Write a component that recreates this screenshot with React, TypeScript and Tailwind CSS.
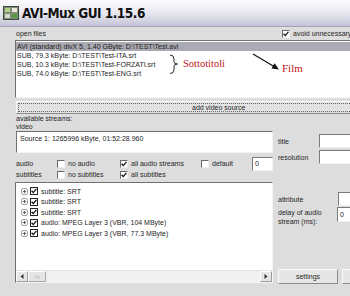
import React from "react";

const Check = ({ checked }: { checked?: boolean }) => (
  <span className="inline-flex shrink-0 w-[8px] h-[8px] bg-white border border-t-[#6a6a6a] border-l-[#6a6a6a] border-b-[#efefef] border-r-[#efefef] items-center justify-center">
    {checked && (
      <svg width="6" height="6" viewBox="0 0 6 6">
        <path d="M0.6 2.8 L2.3 4.6 L5.4 0.9" stroke="#111" strokeWidth="1.3" fill="none" />
      </svg>
    )}
  </span>
);

const TreeCheck = () => (
  <span className="inline-flex shrink-0 w-[8px] h-[8px] bg-white border border-[#222] items-center justify-center">
    <svg width="6" height="6" viewBox="0 0 6 6">
      <path d="M0.6 2.8 L2.3 4.6 L5.4 0.9" stroke="#111" strokeWidth="1.3" fill="none" />
    </svg>
  </span>
);

const Plus = () => (
  <svg width="7" height="7" viewBox="0 0 7 7" className="shrink-0">
    <rect x="0.5" y="0.5" width="6" height="6" rx="1.5" fill="#f4f4f4" stroke="#a8a8a8" />
    <path d="M2 3.5 H5 M3.5 2 V5" stroke="#555" strokeWidth="0.9" />
  </svg>
);

const Input = ({ value, className }: { value?: string; className: string }) => (
  <div className={"bg-white border border-t-[#7a7a7a] border-l-[#7a7a7a] border-b-[#f2f2f2] border-r-[#f2f2f2] pl-[2px] flex items-center " + className}>
    {value}
  </div>
);

const treeItems = [
  "subtitle: SRT",
  "subtitle: SRT",
  "subtitle: SRT",
  "audio: MPEG Layer 3 (VBR, 104 MByte)",
  "audio: MPEG Layer 3 (VBR, 77.3 MByte)",
];

export default function App() {
  return (
    <div className="relative w-[350px] h-[296px] overflow-hidden bg-[#dddddd] font-['Liberation_Sans',Arial,sans-serif] text-[7px] leading-[9px] text-[#262626]">
      {/* Title bar */}
      <div className="h-[27px] flex items-center gap-[3px] pl-[3px] bg-linear-to-b from-[#fbfbfd] via-[#e8e8f0] to-[#c4c4d8] border-b border-[#a4a4b8]">
        <svg width="16" height="16" viewBox="0 0 16 16">
          <rect x="0.5" y="1.5" width="15" height="13" fill="#7d8c78" stroke="#3c4a3a" />
          <rect x="2" y="3" width="5" height="4" fill="#b6d08a" />
          <rect x="9" y="3" width="5" height="4" fill="#e8e8d8" />
          <rect x="2" y="9" width="5" height="4" fill="#d8d8c8" />
          <rect x="9" y="9" width="5" height="4" fill="#5a9a40" />
        </svg>
        <span className="font-bold text-[13.5px] leading-[16px] tracking-[-0.5px] text-[#111] font-['DejaVu_Sans_Condensed','Liberation_Sans',sans-serif]">
          AVI-Mux GUI 1.15.6
        </span>
      </div>

      {/* Body */}
      <div className="pl-[15px]">
        {/* open files row */}
        <div className="h-[13px] flex items-center">
          <span className="w-[267px] shrink-0 pl-[1px]">open files</span>
          <Check checked />
          <span className="ml-[3px] whitespace-nowrap">avoid unnecessary</span>
        </div>

        {/* file list */}
        <div className="h-[58px] mr-[-6px] bg-white border border-t-[#707070] border-l-[#707070] border-b-[#f4f4f4] border-r-[#f4f4f4] pt-[1px] whitespace-nowrap">
          <div className="bg-[#aaaab2] text-[#1a1a1a] pl-[1px] leading-[9px]">
            AVI (standard) divX 5, 1.40 GByte: D:\TEST\Test.avi
          </div>
          <div className="pl-[1px]">SUB, 79.3 kByte: D:\TEST\Test-ITA.srt</div>
          <div className="pl-[1px]">SUB, 10.3 kByte: D:\TEST\Test-FORZATI.srt</div>
          <div className="pl-[1px]">SUB, 74.0 kByte: D:\TEST\Test-ENG.srt</div>
        </div>

        {/* add video source */}
        <div className="mt-[3px] ml-[1px] mr-[-6px] h-[13px] bg-[#e2e2e2] border border-t-[#f8f8f8] border-l-[#f8f8f8] border-b-[#8a8a8a] border-r-[#8a8a8a] p-[1px]">
          <div className="h-full border border-dotted border-[#666] flex items-center pl-[173px] leading-[7px]">
            add video source
          </div>
        </div>

        {/* two columns */}
        <div className="mt-[1px] flex">
          {/* left column */}
          <div className="w-[258px] shrink-0 flex flex-col">
            <div className="pl-[1px] leading-[8px]">available streams:</div>
            <div className="pl-[1px] leading-[8px]">video</div>
            <div className="h-[22px] ml-[1px] bg-white border border-t-[#707070] border-l-[#707070] border-b-[#f4f4f4] border-r-[#f4f4f4] pl-[3px] pt-[2px]">
              Source 1: 1265996 kByte, 01:52:28.960
            </div>

            {/* audio row */}
            <div className="mt-[5px] h-[11px] flex items-center">
              <span className="w-[42px] shrink-0 pl-[1px]">audio</span>
              <Check />
              <span className="ml-[3px] w-[52px] shrink-0">no audio</span>
              <Check checked />
              <span className="ml-[3px] w-[70px] shrink-0 whitespace-nowrap">all audio streams</span>
              <Check />
              <span className="ml-[3px] w-[40px] shrink-0">default</span>
              <Input value="0" className="w-[22px] h-[14px]" />
            </div>
            {/* subtitles row */}
            <div className="h-[11px] flex items-center">
              <span className="w-[42px] shrink-0 pl-[1px]">subtitles</span>
              <Check />
              <span className="ml-[3px] w-[52px] shrink-0">no subtitles</span>
              <Check checked />
              <span className="ml-[3px] whitespace-nowrap">all subtitles</span>
            </div>

            {/* tree */}
            <div className="mt-[2px] h-[101px] bg-white border border-t-[#707070] border-l-[#707070] border-b-[#f4f4f4] border-r-[#f4f4f4] flex flex-col">
              <div className="pt-[3px] pl-[5px] flex flex-col">
                {treeItems.map((t, i) => (
                  <div key={i} className="h-[10.5px] flex items-center gap-[2px] whitespace-nowrap">
                    <Plus />
                    <TreeCheck />
                    <span className="ml-[1px]">{t}</span>
                  </div>
                ))}
              </div>
              <div className="mt-auto h-[12px] flex bg-[#f0f0f0] border-t border-[#e4e4e4]">
                <div className="w-[12px] h-full bg-[#e6e6e6] border border-t-[#ffffff] border-l-[#ffffff] border-b-[#9a9a9a] border-r-[#9a9a9a] flex items-center justify-center">
                  <svg width="4" height="5" viewBox="0 0 4 5"><path d="M3.5 0 L0.5 2.5 L3.5 5 Z" fill="#333" /></svg>
                </div>
                <div className="w-[18px] h-full bg-[#e4e4e4] border border-t-[#ffffff] border-l-[#ffffff] border-b-[#a8a8a8] border-r-[#a8a8a8] flex items-center justify-center">
                  <svg width="6" height="4" viewBox="0 0 6 4"><path d="M1 0.5 V3.5 M3 0.5 V3.5 M5 0.5 V3.5" stroke="#b8b8b8" strokeWidth="0.8" /></svg>
                </div>
                <div className="flex-1" />
                <div className="w-[12px] h-full bg-[#e6e6e6] border border-t-[#ffffff] border-l-[#ffffff] border-b-[#9a9a9a] border-r-[#9a9a9a] flex items-center justify-center">
                  <svg width="4" height="5" viewBox="0 0 4 5"><path d="M0.5 0 L3.5 2.5 L0.5 5 Z" fill="#333" /></svg>
                </div>
              </div>
            </div>
          </div>

          {/* right column */}
          <div className="flex-1 flex flex-col pl-[5px]">
            <div className="mt-[19px] h-[14px] flex items-center">
              <span className="w-[41px] shrink-0">title</span>
              <Input className="w-[40px] h-[14px]" />
            </div>
            <div className="mt-[2px] h-[14px] flex items-center">
              <span className="w-[41px] shrink-0">resolution</span>
              <Input className="w-[40px] h-[14px]" />
            </div>
            <div className="mt-[28px] h-[14px] flex items-center">
              <span className="w-[60px] shrink-0">attribute</span>
              <Input className="w-[20px] h-[14px]" />
            </div>
            <div className="mt-[1px] flex items-start">
              <span className="w-[59px] shrink-0 pt-[1px] leading-[9px]">
                delay of audio
                <br />
                stream (ms):
              </span>
              <Input value="0" className="w-[20px] h-[15px] items-start pt-[2px]" />
            </div>
            <div className="mt-[43px] flex gap-[4px]">
              <div className="w-[60px] h-[15px] shrink-0 bg-[#e6e6e6] border border-t-[#fafafa] border-l-[#fafafa] border-b-[#8c8c8c] border-r-[#8c8c8c] flex items-center justify-center">
                settings
              </div>
              <div className="w-[30px] h-[15px] shrink-0 bg-[#e6e6e6] border border-t-[#fafafa] border-l-[#fafafa] border-b-[#8c8c8c] border-r-[#8c8c8c]" />
            </div>
          </div>
        </div>
      </div>

      {/* annotations */}
      <svg className="absolute left-0 top-0 pointer-events-none" width="350" height="296">
        <path d="M170 55 Q174 55 174 59 L174 62 Q174 64 177.5 64 Q174 64 174 66 L174 70 Q174 73.5 170 73.5" stroke="#111" strokeWidth="0.9" fill="none" />
        <line x1="253" y1="54" x2="274" y2="66.5" stroke="#111" strokeWidth="1.2" />
        <polygon points="279,69.5 271.5,68.5 274.5,63.3" fill="#111" />
      </svg>
      <span className="absolute left-[183px] top-[57px] font-['Liberation_Serif',serif] text-[10.5px] leading-[13px] text-[#c0141c]">
        Sottotitoli
      </span>
      <span className="absolute left-[282px] top-[62px] font-['Liberation_Serif',serif] text-[11px] leading-[13px] text-[#c0141c]">
        Film
      </span>
    </div>
  );
}
